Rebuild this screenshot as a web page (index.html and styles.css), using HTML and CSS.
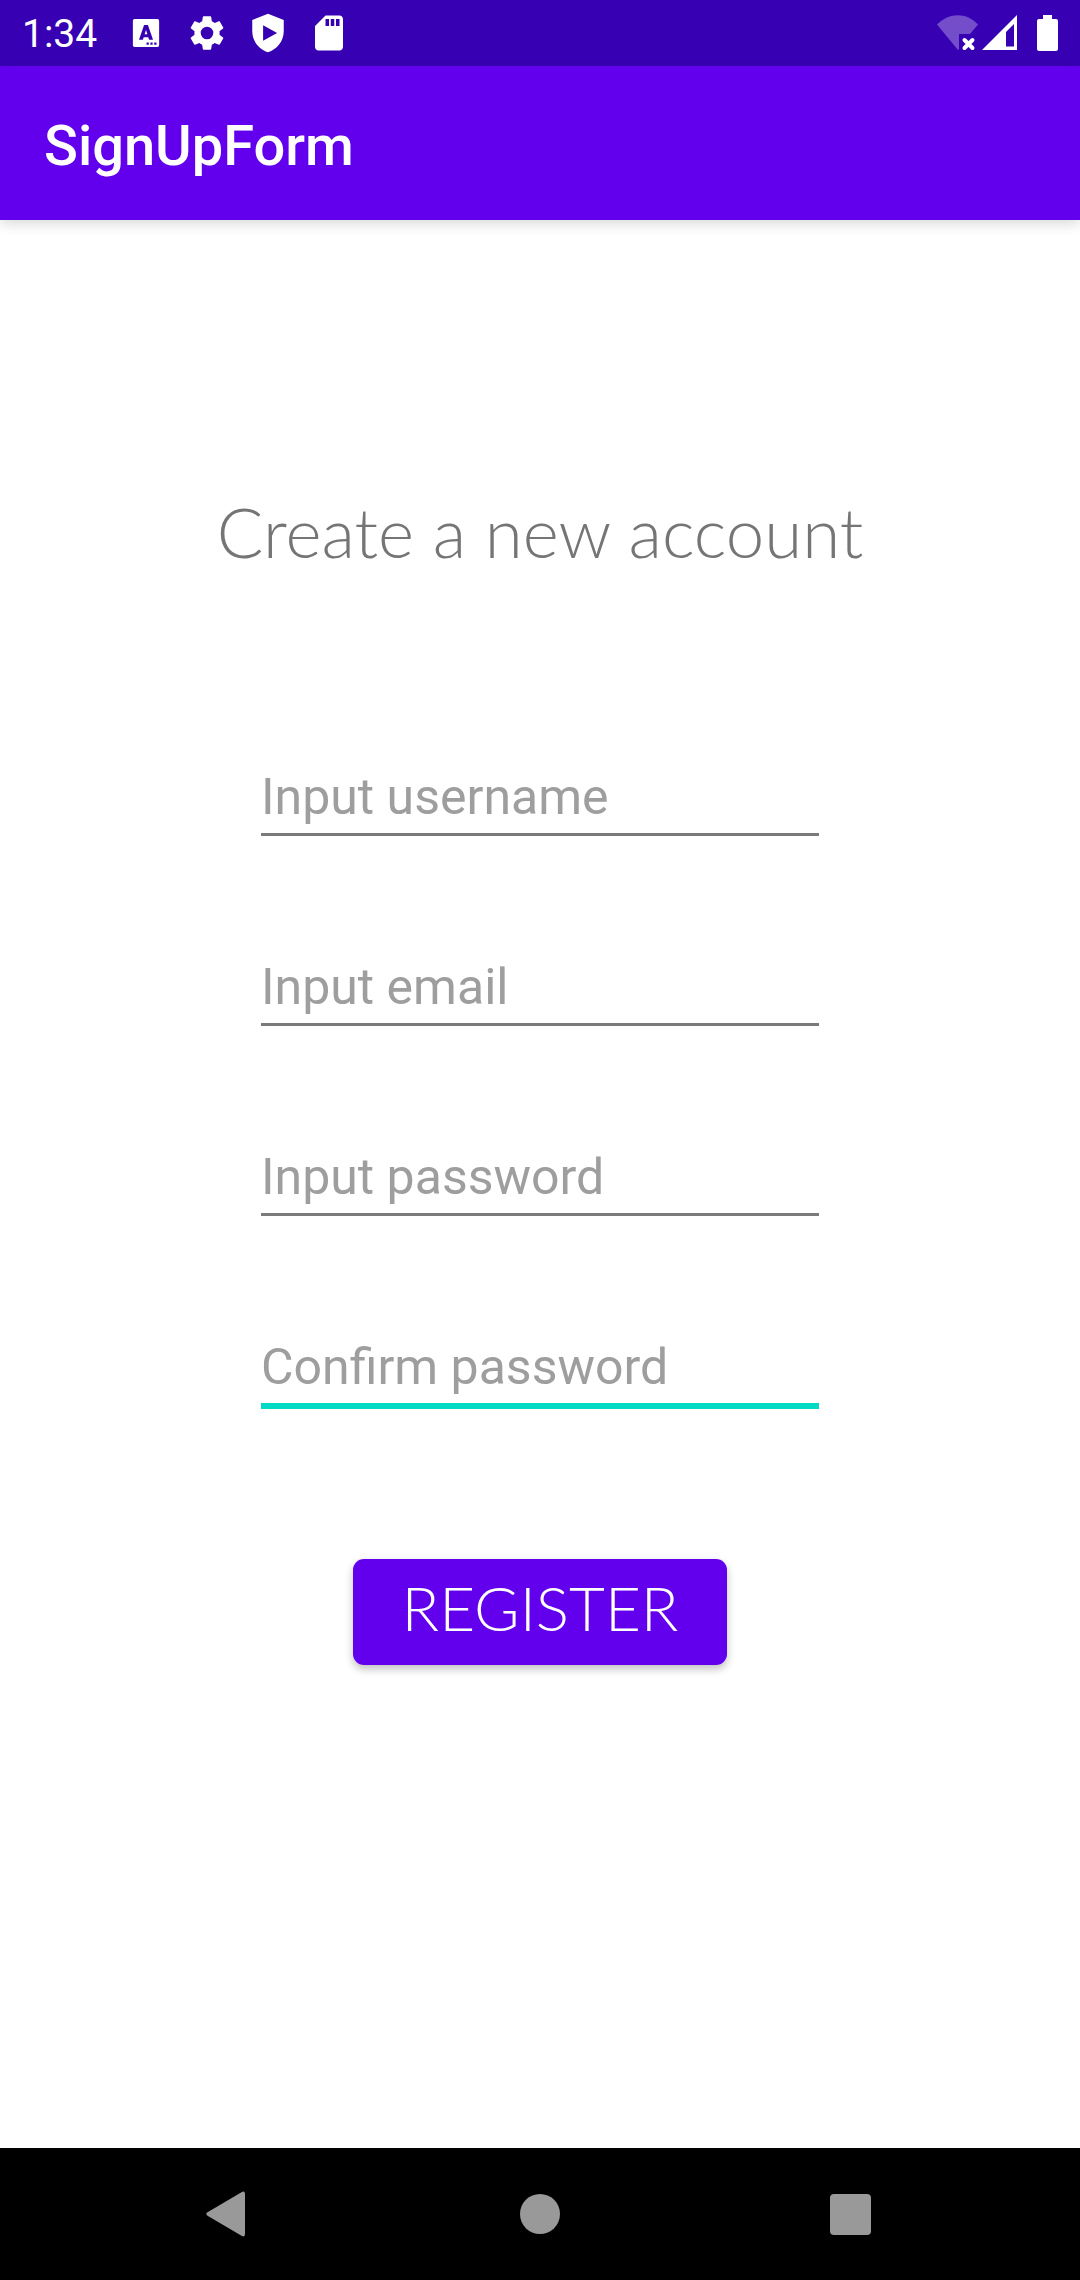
FILE: index.html
```html
<!DOCTYPE html>
<html lang="en">
<head>
<meta charset="utf-8">
<meta name="viewport" content="width=device-width, initial-scale=1">
<title>SignUpForm</title>
<link rel="stylesheet" href="styles.css">
</head>
<body>
<div class="screen">
  <div class="status-bar">
    <time class="clock">1:34</time>
    <div class="notifications">
      <svg class="status-icon" viewBox="0 0 24 24" aria-hidden="true"><path fill-rule="evenodd" d="M5.500 4h13a1 1 0 0 1 1 1v14a1 1 0 0 1-1 1h-13a1 1 0 0 1-1-1V5a1 1 0 0 1 1-1zM10.900 7.400 8 15.900h2.200l.5-1.500h2.600l.5 1.500H16l-2.900-8.500zm1.100 2.900.8 2.400h-1.600zM12.300 17.400v1.300h1.300v-1.300zm2.200 0v1.300h1.300v-1.300zm2.200 0v1.300H18v-1.300z"/></svg>
      <svg class="status-icon" viewBox="0 0 24 24" aria-hidden="true"><path d="M19.14 12.94c.04-.3.06-.61.06-.94 0-.32-.02-.64-.07-.94l2.03-1.58c.18-.14.23-.41.12-.61l-1.92-3.32c-.12-.22-.37-.29-.59-.22l-2.39.96c-.5-.38-1.03-.7-1.62-.94l-.36-2.54c-.04-.24-.24-.41-.48-.41h-3.84c-.24 0-.43.17-.47.41l-.36 2.54c-.59.24-1.13.57-1.62.94l-2.39-.96c-.22-.08-.47 0-.59.22L2.74 8.87c-.12.21-.08.47.12.61l2.03 1.58c-.05.3-.09.63-.09.94s.02.64.07.94l-2.03 1.58c-.18.14-.23.41-.12.61l1.92 3.32c.12.22.37.29.59.22l2.39-.96c.5.38 1.03.7 1.62.94l.36 2.54c.05.24.24.41.48.41h3.84c.24 0 .44-.17.47-.41l.36-2.54c.59-.24 1.13-.56 1.62-.94l2.39.96c.22.08.47 0 .59-.22l1.92-3.32c.12-.22.07-.47-.12-.61zM12 15.6A3.6 3.6 0 1 1 12 8.4a3.6 3.6 0 0 1 0 7.2z"/></svg>
      <svg class="status-icon" viewBox="0 0 24 24" aria-hidden="true"><path fill-rule="evenodd" d="M12 1 3 4.6V11c0 5.6 3.8 10.3 9 12 5.200-1.700 9-6.400 9-12V4.600zM9.200 7.600 17.200 12l-8 4.400z"/></svg>
      <svg class="status-icon" viewBox="0 0 24 24" aria-hidden="true"><path d="M18 2h-8L4 8v12c0 1.100.9 2 2 2h12c1.100 0 2-.9 2-2V4c0-1.100-.9-2-2-2zm-6 6h-2V4h2zm3 0h-2V4h2zm3 0h-2V4h2z"/></svg>
    </div>
    <div class="system">
      <svg class="wifi" viewBox="0 0 42 36" aria-hidden="true"><path class="faded" d="M0 9.500C12-3 30-3 41 9.500L33 19H22v15l-1 1z"/><path class="cross" d="m27.500 25 8 8m0-8-8 8"/></svg>
      <svg class="signal" viewBox="0 0 36 36" aria-hidden="true"><path fill-rule="evenodd" d="M35 0v35H0zM32 9l-8 8v14.500h8z"/></svg>
      <svg class="battery" viewBox="0 0 21 36" aria-hidden="true"><path d="M6 0h9v4h4a2 2 0 0 1 2 2v28a2 2 0 0 1-2 2H2a2 2 0 0 1-2-2V6a2 2 0 0 1 2-2h4z"/></svg>
    </div>
  </div>

  <header class="app-bar">
    <h1 class="app-title">SignUpForm</h1>
  </header>

  <main class="content">
    <h2 class="heading">Create a new account</h2>
    <form class="form">
      <input class="field" type="text" placeholder="Input username" aria-label="Input username">
      <input class="field" type="email" placeholder="Input email" aria-label="Input email">
      <input class="field" type="password" placeholder="Input password" aria-label="Input password">
      <input class="field field-active" type="password" placeholder="Confirm password" aria-label="Confirm password">
      <button class="register" type="submit">REGISTER</button>
    </form>
  </main>

  <nav class="nav-bar">
    <button class="nav-button" type="button" aria-label="Back"><svg class="nav-icon" viewBox="0 0 48 48" aria-hidden="true"><path d="M3.500 22.300 37.500 2.200q3.500-1.800 3.500 1.800v40q0 3.600-3.500 1.800L3.500 25.700q-2.500-1.700 0-3.400z"/></svg></button>
    <button class="nav-button" type="button" aria-label="Home"><svg class="nav-icon" viewBox="0 0 48 48" aria-hidden="true"><circle cx="24" cy="24" r="20"/></svg></button>
    <button class="nav-button" type="button" aria-label="Recent apps"><svg class="nav-icon" viewBox="0 0 48 48" aria-hidden="true"><rect x="2" y="4" width="41" height="41" rx="4"/></svg></button>
  </nav>
</div>
</body>
</html>
```
FILE: styles.css
```css
* {
  box-sizing: border-box;
}

body {
  margin: 0;
  background: #fff;
  font-family: Roboto, "Liberation Sans", sans-serif;
}

.screen {
  display: flex;
  flex-direction: column;
  min-height: 100vh;
}

.status-bar {
  display: flex;
  align-items: center;
  height: 66px;
  padding: 0 22px;
  background: #3700b3;
  color: #fff;
}

.status-bar svg {
  fill: currentColor;
}

.clock {
  padding-top: 2px;
  font-size: 39px;
  line-height: 48px;
}

.notifications {
  display: flex;
  gap: 19px;
  margin-left: 28px;
}

.status-icon {
  width: 42px;
  height: 42px;
}

.system {
  display: flex;
  gap: 3px;
  margin-left: auto;
}

.wifi {
  width: 42px;
  height: 36px;
}

.faded {
  opacity: 0.3;
}

.cross {
  fill: none;
  stroke: currentColor;
  stroke-width: 4;
  stroke-linecap: round;
}

.signal {
  width: 36px;
  height: 36px;
}

.battery {
  width: 21px;
  height: 36px;
  margin-left: 16px;
}

.app-bar {
  display: flex;
  align-items: center;
  height: 154px;
  padding: 6px 44px 0;
  background: #6200ee;
  color: #fff;
  box-shadow: 0 4px 12px rgba(0, 0, 0, 0.15);
}

.app-title {
  margin: 0;
  font-size: 56px;
  font-weight: 500;
  line-height: 64px;
}

.content {
  display: flex;
  flex: 1;
  flex-direction: column;
  align-items: center;
  padding: 272px 32px 96px;
}

.heading {
  margin: 0;
  color: #757575;
  font-family: "Coming Soon", Lato, sans-serif;
  font-size: 69px;
  font-weight: 300;
  line-height: 80px;
}

.form {
  display: flex;
  flex-direction: column;
  align-items: center;
  gap: 110px;
  width: 100%;
  max-width: 558px;
  margin-top: 184px;
}

.field {
  width: 100%;
  height: 80px;
  padding: 4px 0 0;
  border: 0;
  border-bottom: 3px solid #7a7a7a;
  outline: 0;
  background: none;
  color: #212121;
  font: inherit;
  font-size: 50px;
}

.field::placeholder {
  color: #9e9e9e;
  opacity: 1;
}

.field-active,
.field:focus {
  height: 83px;
  border-bottom: 6px solid #03dac5;
}

.register {
  margin-top: 40px;
  padding: 8px 49px 18px;
  border: 0;
  border-radius: 11px;
  background: #6200ee;
  box-shadow: 0 4px 8px rgba(0, 0, 0, 0.25);
  color: #fff;
  font-family: "Coming Soon", Lato, sans-serif;
  font-size: 62px;
  font-weight: 300;
  line-height: 80px;
}

.nav-bar {
  display: grid;
  grid-template-columns: repeat(3, 1fr);
  height: 132px;
  padding: 0 72px;
  background: #000;
}

.nav-button {
  display: flex;
  align-items: center;
  justify-content: center;
  padding: 0;
  border: 0;
  background: none;
  color: #999;
}

.nav-icon {
  width: 48px;
  height: 48px;
  fill: currentColor;
}
```
